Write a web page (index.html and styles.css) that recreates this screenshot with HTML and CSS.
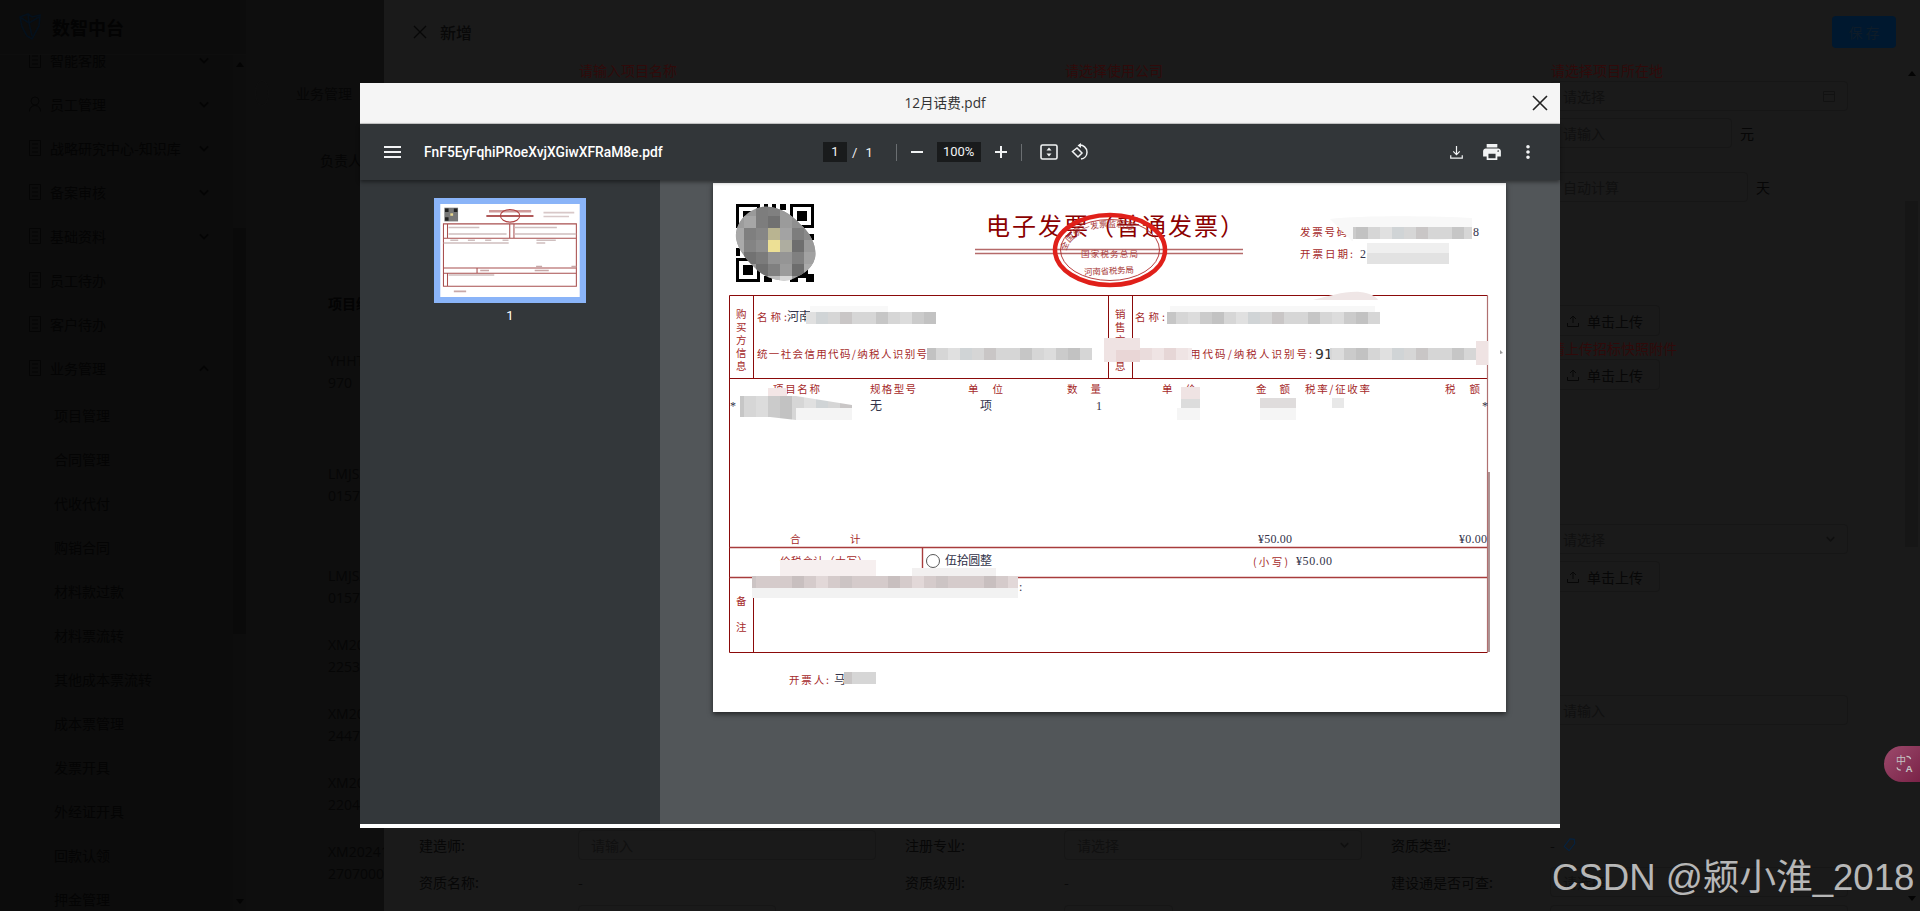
FILE: index.html
```html
<!DOCTYPE html>
<html lang="zh-CN">
<head>
<meta charset="utf-8">
<title>新增</title>
<link rel="stylesheet" href="styles.css">
</head>
<body>
<svg class="defs" width="0" height="0" aria-hidden="true">
  <defs>
    <symbol id="i-chev" viewBox="0 0 12 8"><path d="M1 1.5l5 5 5-5" fill="none" stroke="currentColor" stroke-width="2"/></symbol>
    <symbol id="i-doc" viewBox="0 0 12 16"><path d="M.5.5h11v15H.5zM3 4h6M3 8h6M3 12h6" fill="none" stroke="currentColor"/></symbol>
    <symbol id="i-user" viewBox="0 0 12 16"><circle cx="6" cy="5" r="4" fill="none" stroke="currentColor"/><path d="M.5 15.5c0-4 2.500-6 5.500-6s5.500 2 5.500 6" fill="none" stroke="currentColor"/></symbol>
    <symbol id="i-up" viewBox="0 0 12 12"><path d="M6 8V1M3 4l3-3 3 3M.5 8v3.500h11V8" fill="none" stroke="currentColor"/></symbol>
  </defs>
</svg>

<aside class="sidebar">
  <div class="brand">
    <svg class="logo" viewBox="0 0 24 28"><path d="M2 4l8-3 4 3 8-2-1 11-7 13-5-3-5-9zM10 1l1 9 3 13M2 4l9 6 10-6" fill="none" stroke="#04101c" stroke-width="1.600"/></svg>
    <span class="brand-name">数智中台</span>
  </div>
  <div class="side-scroll">
    <nav class="nav">
      <a class="nav-item"><svg class="nav-ico"><use href="#i-doc"/></svg><span>智能客服</span><svg class="nav-chev"><use href="#i-chev"/></svg></a>
      <a class="nav-item"><svg class="nav-ico"><use href="#i-user"/></svg><span>员工管理</span><svg class="nav-chev"><use href="#i-chev"/></svg></a>
      <a class="nav-item"><svg class="nav-ico"><use href="#i-doc"/></svg><span>战略研究中心-知识库</span><svg class="nav-chev"><use href="#i-chev"/></svg></a>
      <a class="nav-item"><svg class="nav-ico"><use href="#i-doc"/></svg><span>备案审核</span><svg class="nav-chev"><use href="#i-chev"/></svg></a>
      <a class="nav-item"><svg class="nav-ico"><use href="#i-doc"/></svg><span>基础资料</span><svg class="nav-chev"><use href="#i-chev"/></svg></a>
      <a class="nav-item"><svg class="nav-ico"><use href="#i-doc"/></svg><span>员工待办</span></a>
      <a class="nav-item"><svg class="nav-ico"><use href="#i-doc"/></svg><span>客户待办</span></a>
      <a class="nav-item"><svg class="nav-ico"><use href="#i-doc"/></svg><span>业务管理</span><svg class="nav-chev flip"><use href="#i-chev"/></svg></a>
      <a class="nav-sub first">项目管理</a>
      <a class="nav-sub">合同管理</a>
      <a class="nav-sub">代收代付</a>
      <a class="nav-sub">购销合同</a>
      <a class="nav-sub">材料款过款</a>
      <a class="nav-sub">材料票流转</a>
      <a class="nav-sub">其他成本票流转</a>
      <a class="nav-sub">成本票管理</a>
      <a class="nav-sub">发票开具</a>
      <a class="nav-sub">外经证开具</a>
      <a class="nav-sub">回款认领</a>
      <a class="nav-sub">押金管理</a>
    </nav>
    <div class="side-bar"><i class="arrow-up"></i><b class="side-thumb"></b><i class="arrow-down"></i></div>
  </div>
</aside>

<main class="main">
  <div class="crumb"><span class="back"></span><span>业务管理</span></div>
  <div class="filter">负责人</div>
  <div class="th">项目编号</div>
  <div class="td td-a">YHHT2024<br>970</div>
  <div class="td td-b">LMJS2024<br>015741</div>
  <div class="td td-c">LMJS2024<br>015742</div>
  <div class="td td-c">XM202412<br>225301</div>
  <div class="td td-c">XM202412<br>244701</div>
  <div class="td td-c">XM202412<br>220401</div>
  <div class="td td-c">XM202412<br>27070001</div>
</main>

<section class="drawer">
  <header class="drawer-head">
    <svg class="drawer-x" viewBox="0 0 14 14"><path d="M1 1l12 12M13 1L1 13" stroke="#070707" stroke-width="1.300"/></svg>
    <span class="drawer-title">新增</span>
    <button class="save">保存</button>
  </header>
  <div class="drawer-body">
    <form class="form">
      <div class="row">
        <div class="err">请输入项目名称</div>
        <div class="err">请选择使用公司</div>
        <div class="err">请选择项目所在地</div>
      </div>
      <div class="row m4"><div class="field col3"><span class="label"></span><div class="box grow">请选择<svg class="cal" viewBox="0 0 12 12"><path d="M.5 1.500h11v10H.5zM.5 4.500h11" fill="none" stroke="currentColor"/></svg></div></div></div>
      <div class="row m6"><div class="field col3"><span class="label"></span><div class="box w182">请输入</div><span class="suffix">元</span></div></div>
      <div class="row m23"><div class="field col3"><span class="label"></span><div class="box w198">自动计算</div><span class="suffix">天</span></div></div>
      <div class="row m103"><div class="field col3"><span class="label"></span><div class="upload"><svg class="up"><use href="#i-up"/></svg>单击上传</div></div></div>
      <div class="row m6"><div class="err col3">请上传招标快照附件</div></div>
      <div class="row m5"><div class="field col3"><span class="label"></span><div class="upload"><svg class="up"><use href="#i-up"/></svg>单击上传</div></div></div>
      <div class="row m133"><div class="field col3"><span class="label"></span><div class="box grow">请选择<svg class="sel"><use href="#i-chev"/></svg></div></div></div>
      <div class="row m7"><div class="field col3"><span class="label"></span><div class="upload"><svg class="up"><use href="#i-up"/></svg>单击上传</div></div></div>
      <div class="row m102"><div class="field col3"><span class="label"></span><div class="box grow">请输入</div></div></div>
      <div class="row m104">
        <div class="field"><span class="label">建造师:</span><div class="box grow">请输入</div></div>
        <div class="field"><span class="label">注册专业:</span><div class="box grow">请选择<svg class="sel"><use href="#i-chev"/></svg></div></div>
        <div class="field"><span class="label">资质类型:</span><span>-</span><svg class="tag" viewBox="0 0 14 16"><path d="M7.500 1l5 .5.500 5-6.500 8L1 9.500z" fill="none" stroke="#06223f" stroke-width="1.300"/></svg></div>
      </div>
      <div class="row m6">
        <div class="field"><span class="label">资质名称:</span><span>-</span></div>
        <div class="field"><span class="label">资质级别:</span><span>-</span></div>
        <div class="field"><span class="label">建设通是否可查:</span><div class="box grow">请选择</div></div>
      </div>
      <div class="row m7">
        <div class="field"><span class="label"></span><div class="box w198"></div></div>
        <div class="field"><span class="label"></span><div class="box w109"></div></div>
        <div class="field"><span class="label"></span><div class="box grow"></div></div>
      </div>
    </form>
    <div class="drawer-bar"><i class="arrow-up"></i><b class="drawer-thumb"></b><i class="arrow-down"></i></div>
  </div>
</section>

<section class="modal">
  <header class="modal-title">
    <span>12月话费.pdf</span>
    <svg class="modal-x" viewBox="0 0 16 16"><path d="M1 1l14 14M15 1L1 15" stroke="#222" stroke-width="1.600"/></svg>
  </header>
  <div class="pdf">
    <div class="pdf-bar">
      <div class="pdf-left">
        <svg class="menu" viewBox="0 0 17 12"><path d="M0 0h17v2H0zM0 5h17v2H0zM0 10h17v2H0z" fill="#f1f3f4"/></svg>
        <span class="file">FnF5EyFqhiPRoeXvjXGiwXFRaM8e.pdf</span>
      </div>
      <div class="pdf-mid">
        <span class="num">1</span><span class="sl">/</span><span class="tot">1</span>
        <i class="divider"></i>
        <svg class="pm" viewBox="0 0 12 12"><path d="M0 5h12v2H0z" fill="#f1f3f4"/></svg>
        <span class="zoomv">100%</span>
        <svg class="pm pl" viewBox="0 0 12 12"><path d="M5 0h2v5h5v2H7v5H5V7H0V5h5z" fill="#f1f3f4"/></svg>
        <i class="divider d2"></i>
        <svg class="fit" viewBox="0 0 18 16"><rect x="1" y="1" width="16" height="14" rx="1.500" fill="none" stroke="#f1f3f4" stroke-width="1.600"/><path d="M9 3.500l2.500 3h-5zM9 12.500l-2.500-3h5z" fill="#f1f3f4"/></svg>
        <svg class="rot" viewBox="0 0 18 18"><path d="M6.500 6.500l5 5-4 4-5.500-5.500z" fill="none" stroke="#f1f3f4" stroke-width="1.500" transform="translate(-.5 -1.500)"/><path d="M8 2.200a7 7 0 0 1 8 7 7 7 0 0 1-6 6.800" fill="none" stroke="#f1f3f4" stroke-width="1.500"/><path d="M10 0L6.500 2.500 10 5z" fill="#f1f3f4"/></svg>
      </div>
      <div class="pdf-right">
        <svg class="dl" viewBox="0 0 14 14"><path d="M7 0v9M3.500 5.800L7 9.300l3.500-3.500M.8 10v3h12.400v-3" fill="none" stroke="#f1f3f4" stroke-width="1.300"/></svg>
        <svg class="pr" viewBox="2 3 20 18"><path fill="#f1f3f4" d="M19 8H5c-1.660 0-3 1.340-3 3v6h4v4h12v-4h4v-6c0-1.660-1.340-3-3-3zm-3 11H8v-5h8v5zm3-7c-.550 0-1-.450-1-1s.450-1 1-1 1 .450 1 1-.450 1-1 1zm-1-9H6v4h12V3z"/></svg>
        <svg class="more" viewBox="10 4 4 16"><path fill="#f1f3f4" d="M12 8c1.100 0 2-.9 2-2s-.9-2-2-2-2 .9-2 2 .9 2 2 2zm0 2c-1.100 0-2 .9-2 2s.9 2 2 2 2-.9 2-2-.9-2-2-2zm0 6c-1.100 0-2 .9-2 2s.9 2 2 2 2-.9 2-2-.9-2-2-2z"/></svg>
      </div>
    </div>
    <div class="pdf-body">
      <div class="pdf-side">
        <div class="thumb">
          <svg class="thumb-page" viewBox="713 183 793 529">
            <rect x="713" y="183" width="793" height="529" fill="#fff"/>
            <rect x="736" y="204" width="78" height="78" fill="#777"/>
            <path d="M740 208h20v20h-20zM790 208h20v20h-20zM740 258h20v20h-20z" fill="#222"/>
            <rect x="770" y="236" width="16" height="14" fill="#e8d890"/>
            <path d="M990 224h240" stroke="#cf9a9a" stroke-width="14"/>
            <path d="M975 251h268" stroke="#962222" stroke-width="8"/>
            <ellipse cx="1110" cy="250" rx="55" ry="36" fill="none" stroke="#b04040" stroke-width="6"/>
            <path d="M1300 232h175M1300 254h145" stroke="#d8c8c8" stroke-width="9"/>
            <path d="M731 296h756v355H731zM754 296v81M1108 296v81M1132 296v81M731 378h756M731 547h756M731 577h756M754 577v75M922 547v30" fill="none" stroke="#a84f4f" stroke-width="6"/>
            <path d="M760 317h175M1136 317h240M760 354h330M1136 354h350M732 405h370M1260 405h50M770 389h45M870 389h40M968 389h35M1067 389h34M1260 389h110M760 587h260" stroke="#cfbfbf" stroke-width="9" fill="none"/>
            <path d="M1258 539h34M1459 539h28M940 561h50M1250 561h80M790 680h70" stroke="#c8a8a8" stroke-width="9" fill="none"/>
          </svg>
        </div>
        <div class="thumb-no">1</div>
      </div>
      <div class="pdf-view">
        <svg class="page" viewBox="713 183 793 529" role="img">
          <defs>
            <pattern id="mg" width="144" height="12" patternUnits="userSpaceOnUse" x="0" y="0">
              <rect width="144" height="12" fill="#d6d6d6"/><rect x="12" width="12" height="12" fill="#c6c6c6"/><rect x="36" width="12" height="12" fill="#dcdcdc"/><rect x="48" width="12" height="12" fill="#cbcbcb"/><rect x="60" width="12" height="12" fill="#c2c2c2"/><rect x="84" width="12" height="12" fill="#e0e0e0"/><rect x="96" width="12" height="12" fill="#d0d4d6"/><rect x="120" width="12" height="12" fill="#c9c6c6"/>
            </pattern>
            <pattern id="mp" width="72" height="12" patternUnits="userSpaceOnUse">
              <rect width="72" height="12" fill="#efe4e4"/><rect x="12" width="12" height="12" fill="#e6d6d6"/><rect x="36" width="12" height="12" fill="#f3eaea"/><rect x="60" width="12" height="12" fill="#eadcdc"/>
            </pattern>
            <pattern id="mr" width="96" height="12" patternUnits="userSpaceOnUse">
              <rect width="96" height="12" fill="#d5cbcb"/><rect x="24" width="12" height="12" fill="#c8bfbf"/><rect x="48" width="12" height="12" fill="#e2d8d8"/><rect x="72" width="12" height="12" fill="#ccc4c4"/>
            </pattern>
            <clipPath id="blob"><path d="M762 207C775 205 790 212 800 224C812 234 817 248 815 258C812 270 800 276 790 280C778 282 765 278 755 268C745 258 738 250 736 238C735 225 745 210 762 207Z"/></clipPath>
          </defs>

          <!-- QR code -->
          <g fill="#000">
            <path d="M736 204h24v24h-24zM739 207v18h18v-18zM743 211h10v10h-10zM790 204h24v24h-24zM793 207v18h18v-18zM797 211h10v10h-10zM736 258h24v24h-24zM739 261v18h18v-18zM743 265h10v10h-10z" fill-rule="evenodd"/>
            <path d="M764 204h4v4h4v-4h4v8h-8v4h-4zM780 204h6v6h-6zM736 232h4v4h-4zM736 248h4v8h-4zM764 276h8v6h-8zM776 272h6v6h-6zM786 268h8v6h6v-6h8v6h6v8h-8v-4h-8v4h-8v-4h-4zM804 234h10v6h-10z"/>
          </g>
          <g clip-path="url(#blob)">
            <rect x="732" y="204" width="90" height="80" fill="#9a9a9a"/>
            <rect x="756" y="204" width="12" height="12" fill="#7d7d7d"/><rect x="768" y="204" width="12" height="12" fill="#808080"/><rect x="780" y="204" width="12" height="12" fill="#9b9b9b"/><rect x="792" y="204" width="12" height="12" fill="#a6a6a6"/>
            <rect x="732" y="216" width="12" height="12" fill="#9c9c9c"/><rect x="744" y="216" width="12" height="12" fill="#a6a6a6"/><rect x="756" y="216" width="12" height="12" fill="#7d7d7d"/><rect x="768" y="216" width="12" height="12" fill="#717171"/><rect x="780" y="216" width="12" height="12" fill="#9b9b9b"/><rect x="792" y="216" width="12" height="12" fill="#8f8f8f"/><rect x="804" y="216" width="12" height="12" fill="#aaa"/>
            <rect x="732" y="228" width="12" height="12" fill="#a8a8a8"/><rect x="744" y="228" width="12" height="12" fill="#7f7f7f"/><rect x="756" y="228" width="12" height="12" fill="#868686"/><rect x="768" y="228" width="12" height="12" fill="#b9b491"/><rect x="780" y="228" width="12" height="12" fill="#a3a3a3"/><rect x="792" y="228" width="12" height="12" fill="#7d7d7d"/><rect x="804" y="228" width="12" height="12" fill="#8a8a8a"/>
            <rect x="732" y="240" width="12" height="12" fill="#aaa"/><rect x="744" y="240" width="12" height="12" fill="#848484"/><rect x="756" y="240" width="12" height="12" fill="#8e8e8e"/><rect x="768" y="240" width="12" height="12" fill="#ede095"/><rect x="780" y="240" width="12" height="12" fill="#aeada0"/><rect x="792" y="240" width="12" height="12" fill="#6e6e6e"/><rect x="804" y="240" width="12" height="12" fill="#999"/>
            <rect x="744" y="252" width="12" height="12" fill="#727272"/><rect x="756" y="252" width="12" height="12" fill="#7b7b7b"/><rect x="768" y="252" width="12" height="12" fill="#929292"/><rect x="780" y="252" width="12" height="12" fill="#959595"/><rect x="792" y="252" width="12" height="12" fill="#808080"/><rect x="804" y="252" width="12" height="12" fill="#a1a1a1"/>
            <rect x="756" y="264" width="12" height="12" fill="#6f6f6f"/><rect x="768" y="264" width="12" height="12" fill="#808080"/><rect x="780" y="264" width="12" height="12" fill="#9b9b9b"/><rect x="792" y="264" width="12" height="12" fill="#6d6d6d"/><rect x="804" y="264" width="12" height="12" fill="#aaa"/>
            <rect x="768" y="276" width="12" height="8" fill="#bdbdbd"/><rect x="780" y="276" width="12" height="8" fill="#d6d6d6"/>
          </g>

          <!-- title and double rule -->
          <text class="t-title" x="986" y="235" textLength="258">电子发票（普通发票）</text>
          <path d="M975 249.500h268M975 253.500h268" stroke="#b56a6a" stroke-width="1.600" fill="none"/>

          <!-- stamp -->
          <ellipse cx="1110" cy="250" rx="55" ry="35" fill="none" stroke="#e0201a" stroke-width="4.500"/>
          <ellipse cx="1110" cy="250" rx="49.500" ry="30.500" fill="none" stroke="#b02a2a" stroke-width=".9"/>
          <path id="arc-top" d="M1066 254A44 27 0 0 1 1154 254" fill="none"/>
          <path id="arc-bot" d="M1080 266A40 20 0 0 0 1140 266" fill="none"/>
          <text class="t-stamp"><textPath href="#arc-top" startOffset="3">全国统一发票监制章</textPath></text>
          <text class="t-stamp" x="1081" y="257" textLength="57">国家税务总局</text>
          <text class="t-stamp" x="1084" y="274" textLength="50" transform="rotate(-3 1109 272)">河南省税务局</text>

          <!-- invoice meta -->
          <text class="t" x="1300" y="236" textLength="52">发票号码:</text>
          <text class="t" x="1300" y="258" textLength="53">开票日期:</text>
          <text class="v" x="1360" y="258">2</text>
          <text class="v" x="1473" y="236">8</text>

          <!-- frame -->
          <g fill="none" stroke="#8b0a0a" stroke-width="1">
            <path d="M729.500 652.500V295.500H1487.500"/>
            <path d="M729.500 652.500H1487.500"/>
            <path d="M753.500 295.500v83M1108.500 295.500v83M1132.500 295.500v83M729.500 378.500H1487.500"/>
            <path d="M753.500 577.500v75"/>
          </g>
          <path d="M1487.500 295.500V652" stroke="#b07070" stroke-width="1.200"/>
          <path d="M729.500 547.500H1487M729.500 577.500H1487M922.500 547.500v30" stroke="#a83c3c" stroke-width="1.400" fill="none"/>
          <path d="M1489 472V652" stroke="#9a7a7a" stroke-width="1.600"/>
          <path d="M1500 350l3 3-3 1z" fill="#999"/>

          <!-- vertical labels -->
          <g class="t">
            <text class="t" x="736" y="318">购</text><text class="t" x="736" y="331">买</text><text class="t" x="736" y="344">方</text><text class="t" x="736" y="357">信</text><text class="t" x="736" y="370">息</text>
            <text class="t" x="1115" y="318">销</text><text class="t" x="1115" y="331">售</text><text class="t" x="1115" y="344">方</text><text class="t" x="1115" y="370">息</text>
            <text class="t" x="736" y="605">备</text><text class="t" x="736" y="631">注</text>
          </g>

          <!-- parties -->
          <text class="t" x="757" y="321" textLength="30">名称:</text>
          <text class="v" x="787" y="321">河南</text>
          <text class="t" x="757" y="358" textLength="170">统一社会信用代码/纳税人识别号</text>
          <text class="t" x="1135" y="321" textLength="30">名称:</text>
          <text class="t" x="1190" y="358" textLength="122">用代码/纳税人识别号:</text>
          <text class="v-big" x="1315" y="359">91</text>

          <!-- item table -->
          <text class="t" x="773" y="393" textLength="47">项目名称</text>
          <text class="t" x="870" y="393" textLength="46">规格型号</text>
          <text class="t" x="968" y="393" textLength="35">单 位</text>
          <text class="t" x="1067" y="393" textLength="34">数 量</text>
          <text class="t" x="1162" y="393" textLength="34">单 价</text>
          <text class="t" x="1256" y="393" textLength="34">金 额</text>
          <text class="t" x="1305" y="393" textLength="65">税率/征收率</text>
          <text class="t" x="1445" y="393" textLength="35">税 额</text>
          <text class="v" x="730" y="410">*</text>
          <text class="v" x="870" y="410">无</text>
          <text class="v" x="980" y="410">项</text>
          <text class="v" x="1096" y="410">1</text>
          <text class="v" x="1482" y="410">*</text>

          <!-- totals -->
          <text class="t" x="790" y="543">合</text>
          <text class="t" x="850" y="543">计</text>
          <text class="m" x="1258" y="543" textLength="34">¥50.00</text>
          <text class="m" x="1459" y="543" textLength="28">¥0.00</text>
          <text class="t" x="780" y="565" textLength="88">价税合计（大写）</text>
          <circle cx="933" cy="561" r="6.500" fill="none" stroke="#444" stroke-width=".9"/>
          <text class="v" x="945" y="565" textLength="47">伍拾圆整</text>
          <text class="t" x="1253" y="566" textLength="35">(小写)</text>
          <text class="m" x="1296" y="565" textLength="36">¥50.00</text>
          <text class="t" x="789" y="684" textLength="40">开票人:</text>
          <text class="v" x="834" y="684">马</text>
          <text class="v" x="1019" y="591">:</text>

          <!-- mosaics that mask private data -->
          <rect x="810" y="306" width="78" height="6" fill="#f8f8f8"/>
          <rect x="806" y="312" width="130" height="12" fill="url(#mg)"/>
          <rect x="927" y="348" width="165" height="12" fill="url(#mg)"/>
          <rect x="1116" y="348" width="76" height="12" fill="url(#mp)"/>
          <rect x="1104" y="338" width="36" height="24" fill="#efe3e3"/>
          <rect x="1116" y="350" width="24" height="12" fill="#e9d6d6"/>
          <rect x="1170" y="306" width="205" height="6" fill="#f7f7f7"/>
          <rect x="1167" y="312" width="213" height="12" fill="url(#mg)"/>
          <path d="M1313 300C1330 296 1345 291 1360 292C1370 293 1377 297 1378 300Z" fill="#efe6e6"/>
          <rect x="1330" y="348" width="146" height="12" fill="url(#mg)"/>
          <rect x="1476" y="341" width="12" height="24" fill="#efe3e3"/>
          <path d="M1330 219C1360 215 1440 216 1472 218V234C1450 243 1420 240 1400 236H1353V241H1352Z" fill="#f8f8f8"/>
          <rect x="1353" y="227" width="119" height="12" fill="url(#mg)"/>
          <rect x="1367" y="243" width="82" height="10" fill="#efefef"/>
          <rect x="1367" y="253" width="82" height="11" fill="#e2e2e2"/>
          <path d="M740 396H796L852 405V420H796L770 417H740Z" fill="url(#mg)"/>
          <rect x="768" y="388" width="19" height="8" fill="#f3e6e6"/>
          <rect x="796" y="408" width="56" height="12" fill="#f4f4f4"/>
          <rect x="1181" y="387" width="19" height="12" fill="#efe3e3"/>
          <rect x="1181" y="399" width="19" height="9" fill="#dcdcdc"/>
          <rect x="1177" y="408" width="23" height="12" fill="#f5f5f5"/>
          <rect x="1260" y="398" width="36" height="10" fill="#dfdcdc"/>
          <rect x="1260" y="408" width="36" height="12" fill="#f5f5f5"/>
          <rect x="1332" y="398" width="12" height="10" fill="#e8e8e8"/>
          <rect x="780" y="560" width="96" height="17" fill="#f6efef"/>
          <rect x="912" y="568" width="84" height="9" fill="#f2f0f0"/>
          <rect x="752" y="576" width="266" height="12" fill="url(#mr)"/>
          <rect x="752" y="588" width="266" height="10" fill="#f2f2f2"/>
          <rect x="844" y="672" width="32" height="12" fill="url(#mg)"/>
        </svg>
      </div>
    </div>
  </div>
</section>

<div class="translate">
  <svg viewBox="0 0 20 20"><text class="tr-zh" x="0" y="10">中</text><text class="tr-a" x="10" y="19">A</text><path d="M11 2.500c2.500 0 4 1 4.500 3M5 17c-2 0-3.500-1-4-3" fill="none" stroke="#c4c4c4" stroke-width="1.200"/></svg>
</div>
<div class="watermark">CSDN @颍小淮_2018</div>
</body>
</html>
```

FILE: styles.css
```css
* { box-sizing: border-box; }
html, body { margin: 0; height: 911px; }
body {
  display: flex;
  overflow: hidden;
  background: #0e0e0e;
  color: #050505;
  font: 14px/22px "Open Sans", "Noto Sans CJK SC", sans-serif;
}
.defs { position: absolute; }

/* sidebar */
.sidebar { width: 246px; flex: none; display: flex; flex-direction: column; background: #0c0c0c; height: 911px; }
.brand { height: 55px; flex: none; display: flex; align-items: center; padding: 0 0 0 18px; gap: 10px; position: relative; z-index: 1; background: #0c0c0c; border-bottom: 1px solid #0e0e0e; }
.logo { width: 24px; height: 28px; }
.brand-name { font: 700 18px/24px "Noto Sans CJK SC", sans-serif; color: #030303; }
.side-scroll { flex: 1; min-height: 0; display: flex; }
.nav { width: 233px; overflow: hidden; display: flex; flex-direction: column; }
.nav-item, .nav-sub { height: 44px; flex: none; display: flex; align-items: center; color: #040404; font-family: "Noto Sans CJK SC", sans-serif; }
.nav-item:first-child { margin-top: -17px; }
.nav-item { padding-left: 29px; }
.nav-ico { width: 12px; height: 16px; margin-right: 9px; color: #050505; }
.nav-chev { width: 10px; height: 7px; margin-left: auto; margin-right: 24px; color: #050505; }
.nav-chev.flip { transform: scaleY(-1); }
.nav-sub { padding-left: 54px; }
.nav-sub.first { margin-top: 3px; }
.side-bar { width: 13px; display: flex; flex-direction: column; background: #0d0d0d; align-items: center; position: relative; }
.arrow-up, .arrow-down { width: 0; height: 0; border: 4px solid transparent; flex: none; }
.arrow-up { border-bottom: 5px solid #040404; border-top-width: 0; }
.arrow-down { border-top: 5px solid #040404; border-bottom-width: 0; }
.side-bar .arrow-up { margin-top: 7px; }
.side-thumb { width: 13px; height: 406px; margin-top: 161px; background: #0a0a0a; flex: none; }
.side-bar .arrow-down { margin-top: 265px; }

/* main (behind the drawer) */
.main { flex: 1; padding: 80px 0 0 9px; background: #0e0e0e; white-space: nowrap; font-size: 14px; overflow: hidden; }
.crumb { height: 26px; display: flex; align-items: center; gap: 27px; color: #060606; font-family: "Noto Sans CJK SC", sans-serif; }
.back { width: 14px; height: 26px; border: 1px solid #101010; border-radius: 50%; }
.filter { margin: 41px 0 0 65px; height: 26px; line-height: 26px; font-family: "Noto Sans CJK SC", sans-serif; }
.th { margin: 117px 0 0 73px; height: 26px; line-height: 26px; font-weight: 700; font-family: "Noto Sans CJK SC", sans-serif; color: #030303; }
.td { margin-left: 73px; line-height: 22px; color: #060606; }
.td-a { margin-top: 34px; height: 113px; }
.td-b { height: 102px; }
.td-c { height: 69px; }

/* drawer */
.drawer { position: absolute; left: 384px; top: 0; width: 1536px; height: 911px; background: #1a1a1a; display: flex; flex-direction: column; color: #0a0a0a; font-family: "Noto Sans CJK SC", sans-serif; }
.drawer-head { height: 64px; flex: none; display: flex; align-items: center; padding: 0 24px 0 29px; }
.drawer-x { width: 14px; height: 14px; margin-right: 13px; }
.drawer-title { font-size: 16px; font-weight: 500; color: #080808; }
.save { margin-left: auto; width: 64px; height: 32px; border: 0; border-radius: 4px; background: #00182f; color: #0f1c28; font: 14px "Noto Sans CJK SC", sans-serif; letter-spacing: 3px; padding: 0 0 0 3px; }
.drawer-body { flex: 1; min-height: 0; display: flex; }
.form { flex: 1; padding-left: 35px; overflow: hidden; min-width: 0; }
.row { display: grid; grid-template-columns: repeat(3, 486px); }
.m4 { margin-top: 4px; } .m5 { margin-top: 5px; } .m6 { margin-top: 6px; } .m7 { margin-top: 7px; }
.m23 { margin-top: 23px; } .m102 { margin-top: 102px; } .m103 { margin-top: 103px; }
.m104 { margin-top: 104px; } .m133 { margin-top: 133px; }
.err { padding-left: 160px; line-height: 12px; height: 12px; color: #300a0a; font-size: 14px; white-space: nowrap; }
.col3 { grid-column: 3; }
.field { display: flex; align-items: center; height: 31px; white-space: nowrap; }
.label { width: 159px; flex: none; color: #070707; }
.box { height: 30px; border: 1px solid #161616; border-radius: 4px; padding: 0 12px; display: flex; align-items: center; justify-content: space-between; color: #101010; }
.grow { width: 298px; }
.w182 { width: 182px; } .w198 { width: 198px; } .w109 { width: 109px; }
.suffix { margin-left: 8px; color: #060606; }
.cal { width: 12px; height: 12px; color: #121212; }
.sel { width: 9px; height: 6px; color: #101010; }
.upload { width: 110px; height: 31px; border: 1px solid #161616; border-radius: 4px; display: flex; align-items: center; gap: 8px; padding-left: 16px; color: #070707; }
.up { width: 12px; height: 12px; color: #070707; }
.tag { width: 13px; height: 14px; margin-left: 8px; }
.drawer-bar { width: 13px; margin: -64px 2px 0 0; display: flex; flex-direction: column; align-items: center; flex: none; }
.drawer-bar .arrow-up { margin-top: 71px; }
.drawer-thumb { width: 13px; height: 346px; margin-top: 125px; background: #161616; flex: none; }
.drawer-bar .arrow-down { margin-top: 349px; }

/* preview modal */
.modal { position: absolute; left: 360px; top: 83px; width: 1200px; height: 745px; background: #fff; display: flex; flex-direction: column; }
.modal-title { height: 41px; flex: none; background: #f5f5f5; border-bottom: 1px solid #ccc; display: flex; align-items: center; justify-content: center; position: relative; color: #333; font-size: 13.600px; padding-right: 30px; }
.modal-x { width: 16px; height: 16px; position: absolute; right: 12px; top: 12px; }
.pdf { height: 700px; display: flex; flex-direction: column; }
.pdf-bar { height: 56px; flex: none; background: #323639; color: #f1f3f4; display: flex; align-items: center; position: relative; z-index: 1; box-shadow: 0 2px 4px rgba(0, 0, 0, .45); font: 13px Roboto, sans-serif; }
.pdf-left { width: 463px; flex: none; display: flex; align-items: center; padding-left: 24px; }
.menu { width: 17px; height: 12px; margin-right: 23px; }
.file { font-weight: 500; white-space: nowrap; color: #fff; font-size: 13.800px; }
.pdf-mid { display: flex; align-items: center; }
.num { width: 24px; height: 20px; background: #191b1c; text-align: center; line-height: 20px; }
.sl { margin-left: 5px; }
.tot { margin-left: 8px; }
.divider { width: 1px; height: 17px; background: #6a6e71; margin-left: 23px; }
.d2 { margin-left: 14px; }
.pm { width: 12px; height: 12px; margin-left: 14px; }
.pl { margin-left: 14px; }
.zoomv { width: 44px; height: 20px; background: #191b1c; text-align: center; line-height: 20px; margin-left: 14px; }
.fit { width: 18px; height: 16px; margin-left: 18px; }
.rot { width: 18px; height: 18px; margin-left: 13px; }
.pdf-right { margin-left: auto; display: flex; align-items: center; padding-right: 30px; }
.dl { width: 13px; height: 13px; }
.pr { width: 18px; height: 16px; margin-left: 20px; }
.more { width: 4px; height: 14px; margin-left: 25px; }
.pdf-body { flex: 1; min-height: 0; display: flex; }
.pdf-side { width: 300px; flex: none; background: #33373a; display: flex; flex-direction: column; align-items: center; padding-top: 18px; }
.thumb { width: 152px; height: 105px; background: #8ab4f8; padding: 6px; flex: none; }
.thumb-page { display: block; width: 140px; height: 93px; }
.thumb-no { color: #fff; font: 13px/20px Roboto, sans-serif; margin-top: 3px; }
.pdf-view { flex: 1; background: #525659; display: flex; justify-content: center; align-items: flex-start; padding: 3px 1px 0 0; }
.page { display: block; width: 793px; height: 529px; background: #fff; box-shadow: 0 2px 5px rgba(0, 0, 0, .6); }

/* svg text of the invoice */
.t-title { font: 24px "Noto Sans CJK SC", sans-serif; fill: #8b0000; }
.t-stamp { font: 8.500px "Noto Sans CJK SC", sans-serif; fill: #a83a3a; }
.t { font: 10.500px "Noto Sans CJK SC", sans-serif; fill: #a52a2a; }
.v { font: 12px "Liberation Serif", "Noto Sans CJK SC", serif; fill: #33334a; }
.v-big { font: 14px "DejaVu Sans", sans-serif; fill: #333; }
.m { font: 12px "Liberation Serif", serif; fill: #33334a; }

/* floating widgets */
.translate { position: absolute; left: 1884px; top: 746px; width: 36px; height: 36px; border-radius: 18px 0 0 18px; background: linear-gradient(135deg, #9c4a6c, #7a2348); padding: 8px 0 0 12px; }
.translate svg { display: block; width: 19px; height: 19px; }
.tr-zh { font: 10.500px "Noto Sans CJK SC", sans-serif; fill: #c4c4c4; }
.tr-a { font: 700 10.500px "Liberation Sans", sans-serif; fill: #c4c4c4; }
.watermark { position: absolute; left: 1552px; top: 855px; font: 36.600px/46px "Liberation Sans", "Noto Sans CJK SC", sans-serif; color: rgba(255, 255, 255, .7); white-space: nowrap; }
```
